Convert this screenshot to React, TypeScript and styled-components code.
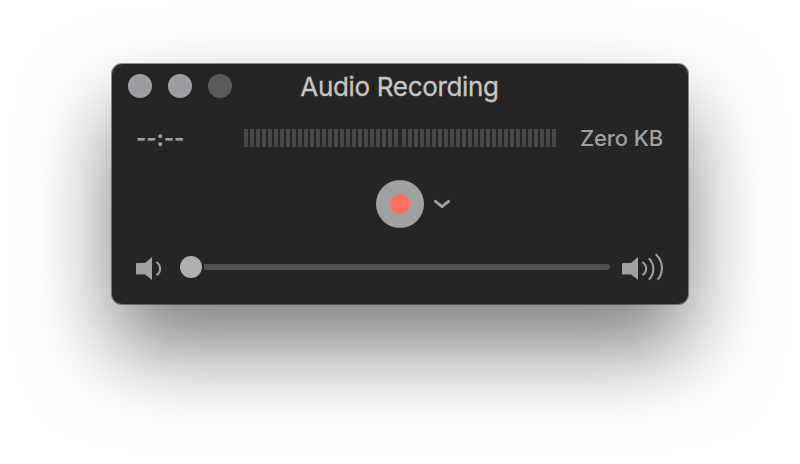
import React from "react";
import styled, { createGlobalStyle } from "styled-components";

const GlobalStyle = createGlobalStyle`
  * { box-sizing: border-box; }
  html, body { margin: 0; background: #fff; overflow: hidden; }
  body { font-family: Inter, "Liberation Sans", sans-serif; }
`;

const Desktop = styled.main`
  height: 464px;
  padding: 64px 112px;
  overflow: hidden;
`;

const Window = styled.section`
  width: 576px;
  height: 240px;
  display: flex;
  flex-direction: column;
  border-radius: 10px;
  background: #252525;
  box-shadow: 0 0 0 1px rgba(0, 0, 0, 0.42), 0 45px 86px rgba(0, 0, 0, 0.51);
`;

const TitleBar = styled.header`
  height: 44px;
  padding: 0 16px;
  display: grid;
  grid-template-columns: 104px 1fr 104px;
  align-items: center;
`;

const WindowButtons = styled.div`
  display: flex;
  gap: 16px;
`;

const WindowButton = styled.span<{ $disabled?: boolean }>`
  width: 24px;
  height: 24px;
  border-radius: 50%;
  background: ${(p) => (p.$disabled ? "#5a5a5a" : "radial-gradient(circle, #99989d, #a3a2a7)")};
`;

const Title = styled.h1`
  margin: 1px 1px 0 0;
  font-size: 26px;
  font-weight: 400;
  line-height: 32px;
  letter-spacing: -0.33px;
  text-align: center;
  white-space: nowrap;
  color: #c6c6c6;
  -webkit-text-stroke: 0.3px #c6c6c6;
`;

const StatusRow = styled.div`
  height: 60px;
  padding: 0 25px 0 24px;
  display: grid;
  grid-template-columns: 108px 312px 1fr;
  align-items: center;
`;

const Status = styled.span<{ $end?: boolean }>`
  font-size: 22px;
  font-weight: ${(p) => (p.$end ? 500 : 700)};
  line-height: 28px;
  letter-spacing: ${(p) => (p.$end ? "-0.12px" : "-0.05px")};
  text-align: ${(p) => (p.$end ? "right" : "left")};
  color: #a0a0a0;
  white-space: nowrap;
`;

const Meter = styled.div`
  display: flex;
  gap: 4px;
`;

const Channel = styled.div`
  display: flex;
  gap: 2px;
`;

const Level = styled.span`
  width: 4px;
  height: 18px;
  background: #484848;
`;

const RecordRow = styled.div`
  height: 72px;
  display: grid;
  grid-template-columns: 1fr 48px 1fr;
  align-items: center;
`;

const RecordButton = styled.button`
  grid-column: 2;
  width: 48px;
  height: 48px;
  padding: 0;
  display: grid;
  place-items: center;
  border: 0;
  border-radius: 50%;
  background: #a0a0a0;
`;

const RecordDot = styled.span`
  width: 20px;
  height: 20px;
  border-radius: 50%;
  background: #ff7062;
`;

const OptionsButton = styled.button`
  width: 16px;
  height: 12px;
  margin-left: 10px;
  padding: 0;
  border: 0;
  background: none;
  display: block;
`;

const VolumeRow = styled.div`
  height: 54px;
  padding: 0 24px;
  display: flex;
  align-items: center;
`;

const Icon = styled.svg`
  display: block;
  flex: none;
`;

const Slider = styled.div`
  width: 430px;
  margin: 0 12px 0 16px;
  display: flex;
  align-items: center;
  gap: 2px;
`;

const Knob = styled.span`
  width: 22px;
  height: 22px;
  border-radius: 50%;
  background: #b0b0b0;
`;

const Track = styled.span`
  flex: 1;
  height: 6px;
  border-radius: 0 3px 3px 0;
  background: #4f4f4f;
`;

const LEVELS = Array.from({ length: 26 }, (_, i) => i);

function MeterChannel() {
  return <Channel>{LEVELS.map((i) => <Level key={i} />)}</Channel>;
}

function Speaker({ loud = false }: { loud?: boolean }) {
  return (
    <Icon width={loud ? 42 : 28} height="28" viewBox={`0 -2 ${loud ? 42 : 28} 28`} aria-hidden="true">
      <path d="M1 8H9L16 2V25L9 19.5H1Q0 19.5 0 18.5V9Q0 8 1 8Z" fill="#a0a0a0" />
      <g fill="none" stroke="#a0a0a0" strokeWidth="2">
        <path d="M20.3 7C25.4 10.5 25.4 16.8 20.3 20.3" />
        {loud && (
          <>
            <path d="M26.9 3.3C32.8 9.5 32.8 18.2 26.9 24.6" />
            <path d="M33.8 -.8C41.6 6.8 41.6 17.5 35.7 24.6" />
          </>
        )}
      </g>
    </Icon>
  );
}

export default function App() {
  return (
    <>
      <GlobalStyle />
      <Desktop>
        <Window>
          <TitleBar>
            <WindowButtons>
              <WindowButton />
              <WindowButton />
              <WindowButton $disabled />
            </WindowButtons>
            <Title>Audio Recording</Title>
          </TitleBar>
          <StatusRow>
            <Status>--:--</Status>
            <Meter>
              <MeterChannel />
              <MeterChannel />
            </Meter>
            <Status $end>Zero KB</Status>
          </StatusRow>
          <RecordRow>
            <RecordButton aria-label="Record">
              <RecordDot />
            </RecordButton>
            <OptionsButton aria-label="Recording options">
              <Icon width="16" height="12" viewBox="0 0 16 12">
                <path d="M1.4 3.3L8 8.6L14.6 3.3" fill="none" stroke="#a0a0a0" strokeWidth="2.8" strokeLinecap="round" strokeLinejoin="round" />
              </Icon>
            </OptionsButton>
          </RecordRow>
          <VolumeRow>
            <Speaker />
            <Slider>
              <Knob />
              <Track />
            </Slider>
            <Speaker loud />
          </VolumeRow>
        </Window>
      </Desktop>
    </>
  );
}
